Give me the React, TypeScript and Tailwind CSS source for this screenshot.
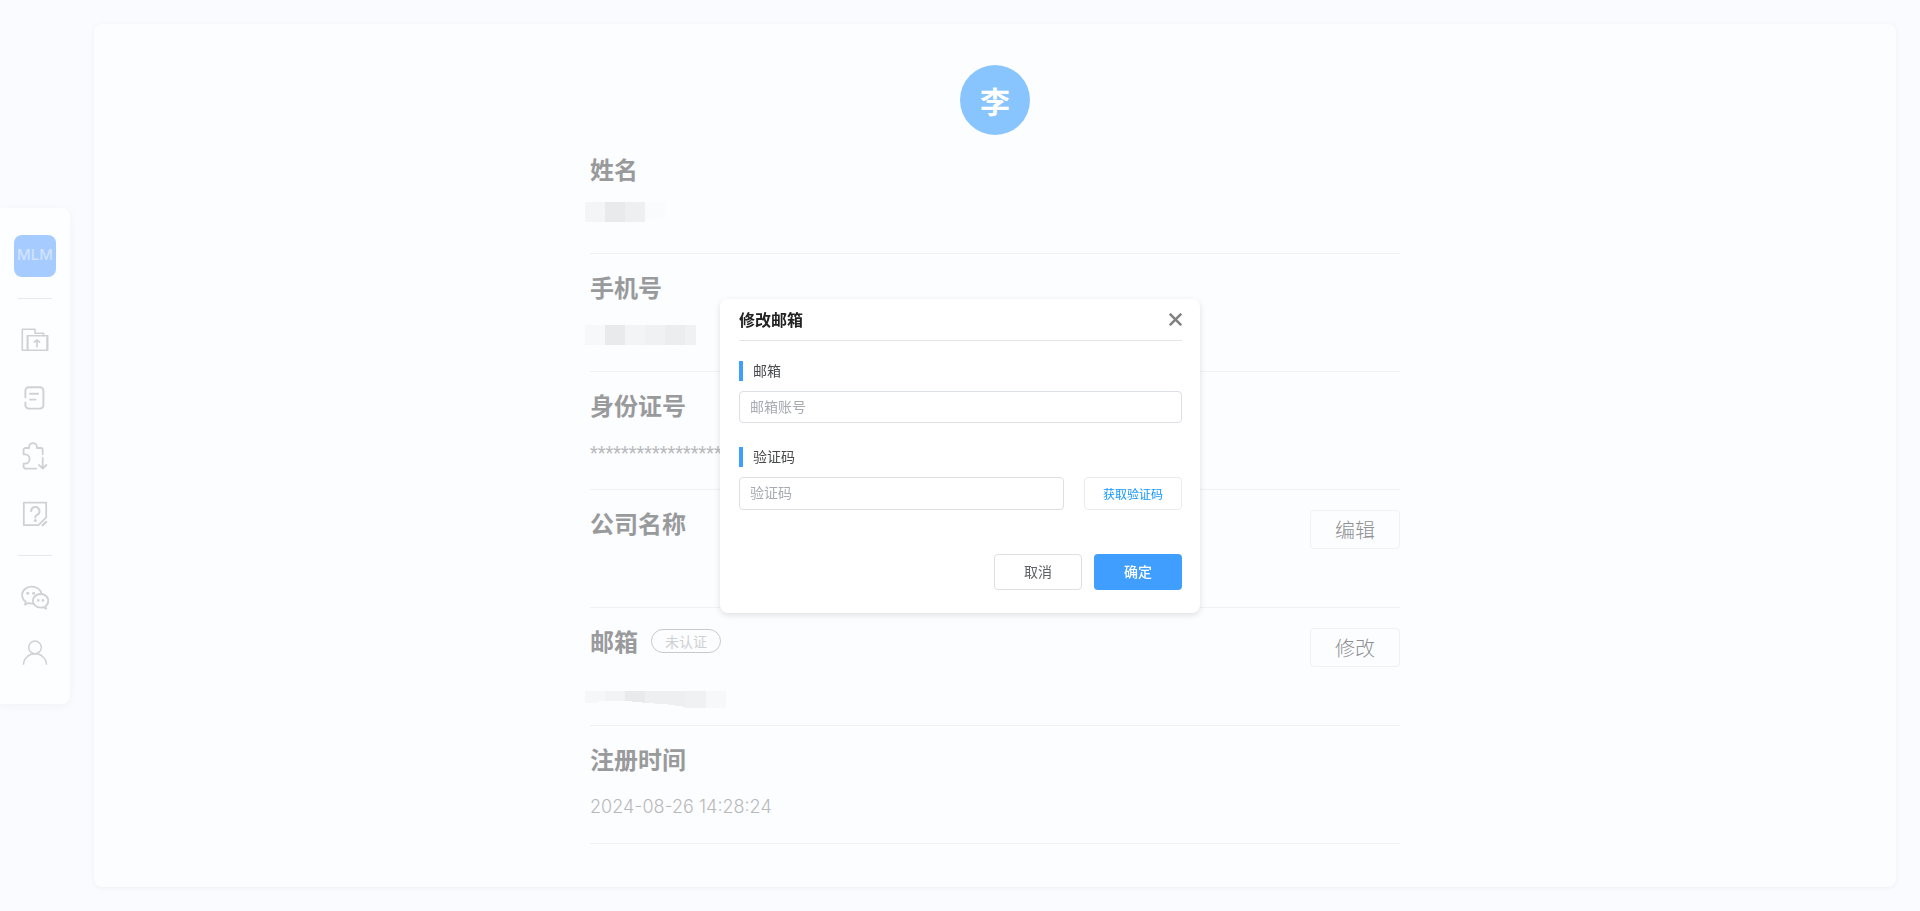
import React, { useState } from "react";

const strokeProps = {
  fill: "none",
  stroke: "currentColor",
  strokeLinecap: "round" as const,
  strokeLinejoin: "round" as const,
};

function FolderUpIcon() {
  return (
    <svg width="28" height="24" viewBox="0 0 28 24" strokeWidth="1.6" {...strokeProps}>
      <path d="M22.6 7.5V5.2H14V1.3H1.3v21h5" />
      <rect x="6.3" y="7.8" width="20.4" height="14.5" />
      <path d="M7 9v13M25.8 9v13" strokeWidth="1.2" />
      <path d="M16 18.6v-6M13.4 14.2 16 11.8l2.6 2.4" strokeWidth="1.7" />
    </svg>
  );
}

function NoteIcon() {
  return (
    <svg width="22" height="24" viewBox="0 0 22 24" strokeWidth="1.9" {...strokeProps}>
      <path d="M1.400 11.4V4.6A3.4 3.4 0 0 1 4.800 1.2h11.2a3.4 3.4 0 0 1 3.4 3.4v14.6a3.4 3.4 0 0 1-3.4 3.4H4.800a3.4 3.4 0 0 1-3.4-3.4v-2.8" />
      <path d="M6 7.8h8.200M6 13.6h5.600" />
    </svg>
  );
}

function PuzzleIcon() {
  return (
    <svg width="26" height="28" viewBox="0 0 26 28" strokeWidth="1.8" {...strokeProps}>
      <path d="M20.700 12.3V7.8a1.8 1.8 0 0 0-1.8-1.8h-4V5a3.9 3.9 0 0 0-7.8 0v1H3.400a1.8 1.8 0 0 0-1.8 1.8v4.6H3a4.6 4.6 0 0 1 0 9.2H1.600v3a2 2 0 0 0 2 2h10.6" />
      <path d="M20.700 16v10.6M17 23l3.7 3.6 3.7-3.6" />
    </svg>
  );
}

function HelpIcon() {
  return (
    <svg width="26" height="26" viewBox="0 0 26 26" strokeWidth="1.8" {...strokeProps}>
      <path d="M24.2 16.3V1.7H1.8v22.4h14.6z" />
      <path d="M9.200 10.2a4.1 4.1 0 1 1 5.8 3.6c-1.2.6-1.700 1.2-1.700 2.6" strokeWidth="2" />
      <circle cx="13.300" cy="19.4" r="1.5" fill="currentColor" stroke="none" />
      <path d="m20.6 24.3 3.6-3.4" strokeWidth="2.2" />
    </svg>
  );
}

function ChatIcon() {
  return (
    <svg width="28" height="26" viewBox="0 0 28 26" strokeWidth="1.8" {...strokeProps}>
      <path d="M20.6 8.8C19.8 4.600 15.700 1.600 10.800 1.600 5.400 1.600 1.100 5.300 1.100 10c0 2.800 1.400 5.200 3.700 6.800L4 19.600l3.400-1.600c1.400.4 2.900.6 4.400.5" />
      <path d="M19.600 9c-4.300 0-7.700 3-7.700 6.800s3.400 6.900 7.700 6.900c1 0 2-.2 2.900-.5l2.600 1.500-.6-2.500c1.800-1.300 2.800-3.200 2.800-5.400C27.300 12 23.900 9 19.600 9z" />
      <g fill="currentColor" stroke="none">
        <circle cx="6.700" cy="8.200" r="1.500" />
        <circle cx="12.600" cy="8.200" r="1.500" />
        <circle cx="17.300" cy="15.400" r="1.300" />
        <circle cx="22" cy="15.400" r="1.300" />
      </g>
    </svg>
  );
}

function UserIcon() {
  return (
    <svg width="26" height="26" viewBox="0 0 26 26" strokeWidth="1.500" {...strokeProps}>
      <circle cx="13" cy="7.400" r="6.300" />
      <path d="M1.500 24.700C1.500 18.500 6.600 13.800 13 13.800s11.500 4.700 11.500 10.900" strokeLinecap="butt" />
    </svg>
  );
}

function NameMosaic() {
  return (
    <svg className="block h-7 w-20 overflow-visible" aria-hidden="true" shapeRendering="crispEdges">
      <rect x="-5" y="1" width="20" height="20" fill="#f4f5f7" />
      <rect x="15" y="1" width="20" height="20" fill="#e9eaec" />
      <rect x="35" y="1" width="20" height="20" fill="#eeeff1" />
      <path d="M55 1h20v14l-20 5z" fill="#fafbfd" />
    </svg>
  );
}

function PhoneMosaic() {
  return (
    <svg className="block h-7 w-28 overflow-visible" aria-hidden="true" shapeRendering="crispEdges">
      <rect x="-5" y="6" width="20" height="20" fill="#f7f8fa" />
      <rect x="15" y="6" width="20" height="20" fill="#e9eaec" />
      <rect x="35" y="6" width="20" height="20" fill="#f3f4f6" />
      <rect x="55" y="6" width="20" height="20" fill="#f0f1f3" />
      <rect x="75" y="6" width="20" height="20" fill="#ecedef" />
      <rect x="95" y="6" width="11" height="20" fill="#f0f1f3" />
    </svg>
  );
}

function EmailMosaic() {
  return (
    <svg className="block h-7 w-36 overflow-visible" aria-hidden="true" shapeRendering="crispEdges">
      <path d="M-5 18h20v10H9l-2 2H-5z" fill="#f6f7f9" />
      <path d="M15 18h20v10H15z" fill="#f2f3f5" />
      <path d="M35 18h20v12l-6-1-14-1z" fill="#e9eaec" />
      <path d="M55 18h40v16l-20-3-20-1z" fill="#eeeff1" />
      <rect x="95" y="18" width="21" height="17" fill="#f0f1f3" />
      <rect x="116" y="18" width="20" height="17" fill="#f7f8fa" />
    </svg>
  );
}

type RowProps = {
  label: string;
  badge?: string;
  action?: string;
  children?: React.ReactNode;
};

function Row({ label, badge, action, children }: RowProps) {
  return (
    <div className="flex items-start justify-between border-b border-[#f0f1f3] pt-5 pb-6">
      <div>
        <dt className="flex items-center gap-[13px] text-2xl leading-[26px] font-bold text-[#999a9c]">
          {label}
          {badge && (
            <span className="flex h-6 items-center rounded-full border border-[#c9cacc] px-[13px] text-sm font-normal text-[#cfd0d2]">
              {badge}
            </span>
          )}
        </dt>
        <dd className="mt-[19px] h-7 text-lg leading-7 text-[#b8b9bb]">{children}</dd>
      </div>
      {action && (
        <button
          type="button"
          className="h-[39px] w-[90px] rounded border border-[#f0f1f3] text-xl font-light text-[#8f9092]"
        >
          {action}
        </button>
      )}
    </div>
  );
}

const topLinks = [
  { name: "项目", Icon: FolderUpIcon },
  { name: "文档", Icon: NoteIcon },
  { name: "插件", Icon: PuzzleIcon },
  { name: "帮助", Icon: HelpIcon },
];

const bottomLinks = [
  { name: "微信", Icon: ChatIcon },
  { name: "个人中心", Icon: UserIcon },
];

function Sidebar() {
  return (
    <nav className="flex w-[70px] shrink-0 flex-col items-center self-center rounded-r-lg bg-[#fdfeff] pt-[27px] pb-[37px] text-[#d0d1d3] shadow-[0_2px_10px_rgba(0,0,0,0.04)]">
      <a
        href="#home"
        className="flex h-[42px] w-[42px] items-center justify-center rounded-lg bg-[#a6cbff] font-[Inter,sans-serif] text-[15px] font-medium text-[#d0e3ff]"
      >
        MLM
      </a>
      <hr className="mt-[21px] mb-[27px] w-[34px] border-[#e8e9eb]" />
      <div className="flex flex-col gap-[30px]">
        {topLinks.map(({ name, Icon }) => (
          <a key={name} href="#nav" aria-label={name} className="flex h-7 w-7 items-center justify-center">
            <Icon />
          </a>
        ))}
      </div>
      <hr className="mt-[27px] mb-[28px] w-[34px] border-[#e8e9eb]" />
      <div className="flex flex-col gap-[27px]">
        {bottomLinks.map(({ name, Icon }) => (
          <a key={name} href="#nav" aria-label={name} className="flex h-7 w-7 items-center justify-center">
            <Icon />
          </a>
        ))}
      </div>
    </nav>
  );
}

const inputClass =
  "w-full min-w-0 flex-1 rounded border border-[#dcdfe6] bg-white px-[10px] pb-0.5 text-sm text-[#606266] outline-none placeholder:text-[#a8abb2]";
const labelClass = "block h-5 border-l-4 border-[#409eff] pl-[10px] text-sm leading-[18px] text-[#4a4b4d]";

function EmailDialog() {
  const [email, setEmail] = useState("");
  const [code, setCode] = useState("");
  return (
    <div className="fixed inset-0 flex items-center justify-center">
      <form
        role="dialog"
        aria-labelledby="dialog-title"
        className="w-[480px] rounded-lg bg-white pr-[18px] pb-[23px] pl-[19px] shadow-[0_2px_6px_rgba(0,0,0,0.12)]"
      >
        <header className="flex h-[42px] items-center justify-between border-b border-[#e4e5e7]">
          <h2 id="dialog-title" className="text-base font-bold text-[#222]">
            修改邮箱
          </h2>
          <button type="button" aria-label="关闭" className="text-[#808183]">
            <svg width="13" height="13" viewBox="0 0 13 13" stroke="currentColor" strokeWidth="2.500">
              <path d="M.8.8l11.400 11.400M12.200.8.8 12.200" />
            </svg>
          </button>
        </header>
        <div className="mt-5 flex flex-col gap-[10px]">
          <label htmlFor="email" className={labelClass}>
            邮箱
          </label>
          <div className="flex h-8">
            <input
              id="email"
              className={inputClass}
              placeholder="邮箱账号"
              value={email}
              onChange={(e) => setEmail(e.target.value)}
            />
          </div>
        </div>
        <div className="mt-6 flex flex-col gap-[10px]">
          <label htmlFor="code" className={labelClass}>
            验证码
          </label>
          <div className="flex h-[33px] gap-5">
            <input
              id="code"
              className={inputClass}
              placeholder="验证码"
              value={code}
              onChange={(e) => setCode(e.target.value)}
            />
            <button
              type="button"
              className="w-[98px] shrink-0 rounded-sm border border-[#ebecef] pt-0.5 text-xs text-[#1296ff]"
            >
              获取验证码
            </button>
          </div>
        </div>
        <footer className="mt-11 flex justify-end gap-3">
          <button
            type="button"
            className="h-9 w-[88px] rounded border border-[#dcdfe6] pb-0.5 text-sm text-[#606266]"
          >
            取消
          </button>
          <button type="button" className="h-9 w-[88px] rounded bg-[#409eff] pb-0.5 text-sm font-medium text-white">
            确定
          </button>
        </footer>
      </form>
    </div>
  );
}

export default function App() {
  return (
    <div className="flex min-h-screen gap-6 bg-[#fafbff] py-6 pr-6 font-['Noto_Sans_CJK_SC',sans-serif]">
      <Sidebar />
      <main className="flex-1 rounded-lg bg-[#fcfdff] pt-[41px] shadow-[0_1px_5px_rgba(0,0,0,0.05)]">
        <div className="mx-auto max-w-[810px]">
          <div className="mx-auto mb-px flex h-[70px] w-[70px] items-center justify-center rounded-full bg-[#88c5ff] text-3xl font-bold text-white">
            李
          </div>
          <dl>
            <Row label="姓名">
              <NameMosaic />
            </Row>
            <Row label="手机号">
              <PhoneMosaic />
            </Row>
            <Row label="身份证号">
              <span className="font-[Roboto,sans-serif]">******************</span>
            </Row>
            <Row label="公司名称" action="编辑" />
            <Row label="邮箱" badge="未认证" action="修改">
              <EmailMosaic />
            </Row>
            <Row label="注册时间">
              <time className="font-[Inter,sans-serif] font-light">2024-08-26 14:28:24</time>
            </Row>
          </dl>
        </div>
      </main>
      <EmailDialog />
    </div>
  );
}
